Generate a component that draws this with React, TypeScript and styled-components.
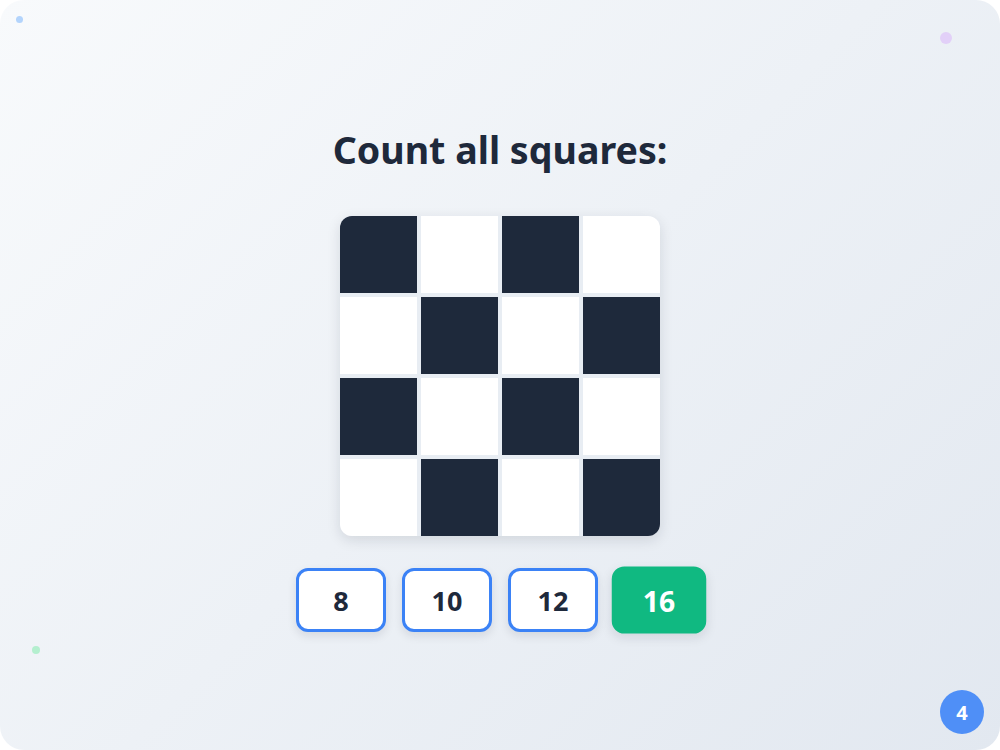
import React from "react";
import styled, { createGlobalStyle } from "styled-components";

const Global = createGlobalStyle`
  html, body { margin: 0; padding: 0; background: #ffffff; }
  body { font-family: "Noto Sans", "Open Sans", sans-serif; }
  * { box-sizing: border-box; }
`;

const Stage = styled.div`
  position: relative;
  width: 1000px;
  height: 750px;
  border-radius: 24px;
  overflow: hidden;
  background: linear-gradient(135deg, #f8fafc 0%, #e2e8f0 100%);
  display: flex;
  flex-direction: column;
  align-items: center;
  padding-top: 122px;
`;

const Title = styled.h1`
  margin: 0 0 38px;
  font-size: 37.6px;
  line-height: 56px;
  font-weight: 700;
  color: #1e293b;
`;

const Board = styled.div`
  width: 320px;
  height: 320px;
  display: grid;
  grid-template-columns: repeat(4, 1fr);
  grid-template-rows: repeat(4, 1fr);
  gap: 4px;
  background: #e8edf3;
  border-radius: 12px;
  overflow: hidden;
  box-shadow: 0 4px 14px rgba(15, 23, 42, 0.12);
`;

const Cell = styled.div<{ $dark: boolean }>`
  background: ${(p) => (p.$dark ? "#1e293b" : "#ffffff")};
`;

const Options = styled.div`
  margin-top: 32px;
  display: flex;
  align-items: center;
  gap: 16px;
`;

const Option = styled.button<{ $correct?: boolean }>`
  width: 90px;
  height: 64px;
  border-radius: 12px;
  border: 3px solid ${(p) => (p.$correct ? "#10b981" : "#3b82f6")};
  background: ${(p) => (p.$correct ? "#10b981" : "#ffffff")};
  color: ${(p) => (p.$correct ? "#ffffff" : "#1e293b")};
  font-family: "Noto Sans", "Open Sans", sans-serif;
  font-size: 27px;
  font-weight: 700;
  box-shadow: 0 4px 10px rgba(15, 23, 42, 0.1);
  transform: ${(p) => (p.$correct ? "scale(1.05)" : "none")};
  padding: 0;
  cursor: pointer;
`;

const Dot = styled.div<{ $size: number; $color: string; $top: number; $left: number }>`
  position: absolute;
  width: ${(p) => p.$size}px;
  height: ${(p) => p.$size}px;
  border-radius: 50%;
  background: ${(p) => p.$color};
  top: ${(p) => p.$top}px;
  left: ${(p) => p.$left}px;
`;

const Badge = styled.div`
  position: absolute;
  right: 16px;
  bottom: 16px;
  width: 44px;
  height: 44px;
  border-radius: 50%;
  background: #4f8ff7;
  color: #ffffff;
  display: flex;
  align-items: center;
  justify-content: center;
  font-size: 20px;
  font-weight: 700;
`;

export default function App() {
  const cells = Array.from({ length: 16 }, (_, i) => {
    const r = Math.floor(i / 4);
    const c = i % 4;
    return (r + c) % 2 === 0;
  });
  return (
    <>
      <Global />
      <Stage>
        <Dot $size={7} $color="#b3d4fc" $top={16} $left={16} />
        <Dot $size={12} $color="#e2d0f8" $top={32} $left={940} />
        <Dot $size={8} $color="#b4efcf" $top={646} $left={32} />
        <Title>Count all squares:</Title>
        <Board>
          {cells.map((d, i) => (
            <Cell key={i} $dark={d} />
          ))}
        </Board>
        <Options>
          <Option>8</Option>
          <Option>10</Option>
          <Option>12</Option>
          <Option $correct>16</Option>
        </Options>
        <Badge>4</Badge>
      </Stage>
    </>
  );
}
